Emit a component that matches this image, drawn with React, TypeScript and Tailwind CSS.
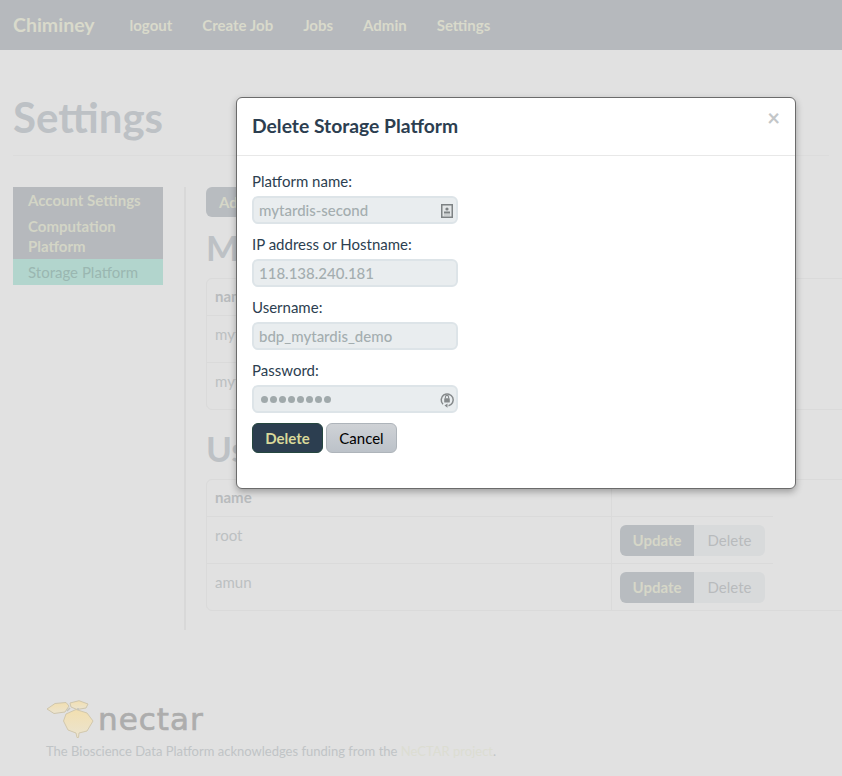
const navLinks = ["logout", "Create Job", "Jobs", "Admin", "Settings"];

const AddressIcon = () => (
  <svg width="12" height="14" viewBox="0 0 12 14" className="absolute right-[3px] top-[6px]">
    <rect x="0.75" y="0.75" width="10.5" height="12.5" fill="#e3e6e7" stroke="#7d8284" strokeWidth="1.5" />
    <circle cx="6" cy="5" r="1.6" fill="#7d8284" />
    <rect x="3" y="7.5" width="6" height="2" fill="#7d8284" />
    <rect x="3" y="10.5" width="6" height="1" fill="#b4b8b9" />
  </svg>
);

const KeyIcon = () => (
  <svg width="16" height="16" viewBox="0 0 16 16" className="absolute right-[1px] top-[5px]">
    <path d="M4 12.2A6 6 0 1 1 9.500 13.800" fill="none" stroke="#85898b" strokeWidth="1.5" />
    <path d="M8.500 11.500v4.200l-3-2.100z" fill="#85898b" />
    <rect x="5.2" y="6.2" width="5.6" height="4.4" rx="0.6" fill="#85898b" />
    <path d="M6.400 6.400V5a1.600 1.600 0 0 1 3.200 0v1.400" fill="none" stroke="#85898b" strokeWidth="1.1" />
  </svg>
);

const NectarMark = () => (
  <svg width="52" height="38" viewBox="0 0 52 38" className="shrink-0">
    <defs>
      <linearGradient id="nectarFill" x1="0" y1="0" x2="0" y2="1">
        <stop offset="0" stopColor="#f2dfb0" />
        <stop offset="1" stopColor="#ebe4d0" />
      </linearGradient>
    </defs>
    <path d="M1 9 9 3.500 20 2.500 23 6 19 12 8 13.500Z" fill="url(#nectarFill)" stroke="#cfc6ad" strokeWidth="1" />
    <path d="M24 3 33 0.700 42 4 40 8 31 9.500 25 7Z" fill="url(#nectarFill)" stroke="#cfc6ad" strokeWidth="1" />
    <path d="M20 14 30 9.500 41 13 47 21 41 31 33 33 32.500 37.500 31 37.500 30 33 22 30 17.500 21Z" fill="url(#nectarFill)" stroke="#d2c8ad" strokeWidth="1" />
    <path d="M21 11 24 8M32 10V8" stroke="#c5c5bd" strokeWidth="1.500" />
  </svg>
);

const Field = ({ label, value, icon, password }: { label: string; value: string; icon?: React.ReactNode; password?: boolean }) => (
  <div className="h-[63px]">
    <div className="h-[22px] text-[15px] leading-[22px] text-[#2c3e50]">{label}</div>
    <div className="relative mt-[4px] flex h-[28px] w-[206px] items-center rounded-[6px] border-2 border-[#dde4e8] bg-[#e9edef] pl-[5px] text-[15px] font-medium text-[#a4adaf]">
      {password ? (
        <span className="flex gap-[2px] pl-[2px]">
          {Array.from({ length: 8 }).map((_, i) => (
            <span key={i} className="h-[7px] w-[7px] rounded-full bg-[#a0a9ab]" />
          ))}
        </span>
      ) : (
        value
      )}
      {icon}
    </div>
  </div>
);

const Row = ({ name }: { name: string }) => (
  <div className="flex h-[47px] w-[566px] border-t border-[#dadada]">
    <div className="w-[405px] border-r border-[#dadada] px-[8px] pt-[7px] text-[15px] text-[#bcc0c2]">{name}</div>
    <div className="flex h-full w-[161px] pl-[8px] pt-[8px]">
      <div className="flex h-[31px] w-[74px] items-center justify-center rounded-l-[6px] bg-[#b8bcc0] text-[15px] font-bold text-[#d6d7c8]">Update</div>
      <div className="flex h-[31px] w-[71px] items-center justify-center rounded-r-[6px] bg-[#d8dadb] text-[15px] text-[#b8bbbd]">Delete</div>
    </div>
  </div>
);

const PlatformTable = ({ names }: { names: string[] }) => (
  <div className="w-[700px] rounded-[6px] border border-[#dadada]">
    <div className="flex h-[36px]">
      <div className="w-[405px] border-r border-[#dadada] px-[8px] pt-[6px] text-[15px] font-bold text-[#b8bbbd]">name</div>
    </div>
    {names.map((name) => (
      <Row key={name} name={name} />
    ))}
  </div>
);

export default function App() {
  return (
    <div className="relative h-[776px] w-[842px] overflow-hidden bg-[#e1e1e1] font-['Lato',sans-serif]">
      <nav className="flex h-[50px] items-center bg-[#b6b9bd] pl-[13px] text-[#d9dacb]">
        <span className="mr-[35px] text-[19.5px] font-bold">Chiminey</span>
        <div className="flex gap-[30px] text-[15px] font-bold">
          {navLinks.map((link) => (
            <span key={link}>{link}</span>
          ))}
        </div>
      </nav>

      <div className="mx-[13px] flex h-[106px] items-start border-b border-[#dcdcdc] pt-[40px]">
        <h1 className="text-[42px] leading-[54px] font-bold text-[#bdc1c5]">Settings</h1>
      </div>

      <div className="mt-[31px] flex pl-[13px]">
        <aside className="w-[150px] shrink-0 text-[15px] leading-[20px]">
          <div className="bg-[#b6b9bd] font-bold text-[#d3d5c6]">
            <div className="px-[15px] py-[3px]">Account Settings</div>
            <div className="px-[15px] py-[3px]">
              Computation
              <br />
              Platform
            </div>
          </div>
          <div className="bg-[#b2d5cd] px-[15px] py-[3px] text-[#9ab7b1]">Storage Platform</div>
        </aside>

        <main className="ml-[21px] h-[443px] border-l-2 border-[#d8d8d8] pl-[20px]">
          <div className="flex h-[30px] w-[70px] items-center rounded-[6px] bg-[#b8bcc0] pl-[13px] text-[15px] font-bold text-[#d6d7c8]">Add</div>
          <h2 className="mt-[8px] h-[53px] text-[35px] leading-[44px] font-bold text-[#bdc1c5]">My</h2>
          <PlatformTable names={["mytardis-first", "mytardis-second"]} />
          <h2 className="mt-[16px] h-[53px] text-[35px] leading-[44px] font-bold text-[#bdc1c5]">Us</h2>
          <PlatformTable names={["root", "amun"]} />
        </main>
      </div>

      <footer className="mt-[70px] pl-[46px]">
        <div className="flex h-[38px] items-center">
          <NectarMark />
          <span className="font-['DejaVu_Sans',sans-serif] text-[31px] leading-none tracking-[1px] text-[#adadad] [-webkit-text-stroke:0.7px_#adadad]">nectar</span>
        </div>
        <p className="mt-[4px] text-[13px] text-[#c0c4c6]">
          The Bioscience Data Platform acknowledges funding from the <span className="text-[#dcddd2]">NeCTAR project</span>.
        </p>
      </footer>

      <div className="absolute top-[97px] left-[236px] h-[392px] w-[560px] rounded-[6px] border border-[#6b6b6b] bg-white shadow-[0_3px_7px_rgba(0,0,0,0.3)]">
        <div className="relative flex h-[58px] items-center border-b border-[#e8e8e8] pl-[15px]">
          <h3 className="text-[19.3px] font-bold text-[#2c3e50]">Delete Storage Platform</h3>
          <span className="absolute top-[7px] right-[15px] text-[22px] leading-[26px] font-bold text-[#c3c6c8]">×</span>
        </div>
        <div className="pt-[14px] pl-[15px]">
          <Field label="Platform name:" value="mytardis-second" icon={<AddressIcon />} />
          <Field label="IP address or Hostname:" value="118.138.240.181" />
          <Field label="Username:" value="bdp_mytardis_demo" />
          <Field label="Password:" value="" password icon={<KeyIcon />} />
          <div className="mt-[1px] flex gap-[3px]">
            <button className="h-[30px] w-[71px] rounded-[6px] border border-[#25473f] bg-[#2c3e50] text-[15px] font-bold text-[#d9d99a]">Delete</button>
            <button className="h-[30px] w-[71px] rounded-[6px] border border-[#aeb4ba] bg-gradient-to-b from-[#cfd2d6] to-[#bcc2c9] text-[15px] text-black">Cancel</button>
          </div>
        </div>
      </div>
    </div>
  );
}
